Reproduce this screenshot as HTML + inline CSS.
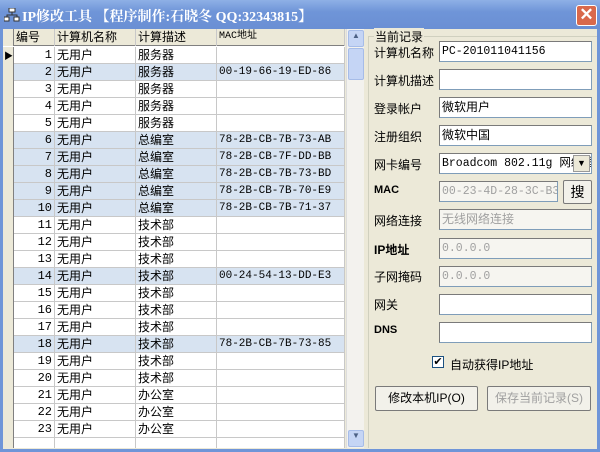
<!DOCTYPE html><html><head><meta charset="utf-8"><style>
*{margin:0;padding:0;box-sizing:border-box}
body{width:600px;height:452px;overflow:hidden;background:#ECE9D8;font-family:"Liberation Sans","SimSun","WenQuanYi Zen Hei","Noto Sans CJK SC",sans-serif;font-size:12px;position:relative;color:#000}
.a{position:absolute}
.title{left:0;top:0;width:600px;height:29px;background:linear-gradient(#8eb0e6,#6f95d8 40%,#6a8fd4);}
.title span{position:absolute;left:22px;top:6px;color:#fff;font-weight:bold;font-size:14px;font-family:"Liberation Serif","Noto Serif CJK SC",serif}
.close{left:576px;top:5px;width:21px;height:21px;background:#d9694c;border:1px solid #fff;border-radius:3px;color:#fff;text-align:center;font-size:17px;line-height:18px;font-weight:bold}
.grid{left:3px;top:29px;width:342px;height:419px;background:#fff;overflow:hidden}
.row{position:absolute;left:0;width:342px;height:17px;border-bottom:1px solid #c8c8c8}
.c{position:absolute;top:0;height:17px;line-height:16px;border-right:1px solid #c8c8c8;white-space:nowrap;overflow:hidden;padding-left:2px}
.ind{left:0;width:11px;background:#ECE9D8;border-right:1px solid #808080}
.hl{background:#D7E3F1}
.mac{font-family:"Liberation Mono",monospace;font-size:11px}
.num{font-family:"Liberation Mono",monospace;font-size:12px}
.lbl{position:absolute;left:374px;font-size:12px}
.inp{position:absolute;left:439px;width:153px;height:21px;background:#fff;border:1px solid #7f9db9;border-top-color:#7a7a7a;border-left-color:#7a7a7a;font-size:12px;padding:2px 2px;line-height:15px;white-space:nowrap;overflow:hidden}
.m{font-family:"Liberation Mono","Noto Sans CJK SC",monospace;font-size:11.5px}
.dis{background:#f6f5f0;color:#a0a0a0}
.btn{position:absolute;height:25px;border:1px solid #7a7a7a;background:#f2f1ea;text-align:center;line-height:23px;font-size:12px;border-radius:2px}
</style></head><body>
<div class="a title"><svg class="a" style="left:4px;top:8px" width="16" height="14"><rect x="5" y="0" width="6" height="4" fill="#fff" stroke="#333"/><rect x="0" y="9" width="5" height="4" fill="#fff" stroke="#333"/><rect x="10" y="9" width="5" height="4" fill="#fff" stroke="#333"/><path d="M8 4v3M3 9V7h10v2" stroke="#333" fill="none"/></svg><span>IP修改工具 【程序制作:石晓冬 QQ:32343815】</span></div>
<div class="a close">✕</div>
<div class="a" style="left:0;top:29px;width:3px;height:423px;background:#6f95d8"></div>
<div class="a" style="left:597px;top:29px;width:3px;height:423px;background:#6f95d8"></div>
<div class="a" style="left:0;top:449px;width:600px;height:3px;background:#6f95d8"></div>
<div class="a grid" id="g">
<div class="row" style="top:0;background:#ECE9D8;border-bottom:1px solid #808080"><div class="c ind"></div><div class="c" style="left:11px;width:41px">编号</div><div class="c" style="left:52px;width:81px">计算机名称</div><div class="c" style="left:133px;width:81px">计算描述</div><div class="c mac" style="left:214px;width:128px;font-size:10px">MAC地址</div></div>
</div>
<div class="a" style="left:346px;top:29px;width:18px;height:419px;background:#f3f2ee;border-left:1px solid #ddd">
<div class="a" style="left:1px;top:1px;width:16px;height:17px;background:#c5d5f5;border:1px solid #a6bce8;border-radius:2px;font-size:8px;text-align:center;color:#4d6185">▲</div>
<div class="a" style="left:1px;top:19px;width:16px;height:32px;background:#c5d5f5;border:1px solid #a6bce8;border-radius:2px"></div>
<div class="a" style="left:1px;top:401px;width:16px;height:17px;background:#c5d5f5;border:1px solid #a6bce8;border-radius:2px;font-size:8px;text-align:center;color:#4d6185">▼</div>
</div>
<div class="a" style="left:368px;top:36px;width:229px;height:412px;border:1px solid #d0d0bf;border-right:none;border-bottom:none"></div>
<div class="a" style="left:374px;top:28px;background:#ECE9D8;font-size:12px;padding:0 1px">当前记录</div>
<div class="lbl" style="top:44px">计算机名称</div><div class="inp m" style="top:41px">PC-201011041156</div>
<div class="lbl" style="top:72px">计算机描述</div><div class="inp" style="top:69px"></div>
<div class="lbl" style="top:100px">登录帐户</div><div class="inp" style="top:97px">微软用户</div>
<div class="lbl" style="top:128px">注册组织</div><div class="inp" style="top:125px">微软中国</div>
<div class="lbl" style="top:156px">网卡编号</div><div class="inp m" style="top:153px;padding-right:20px">Broadcom 802.11g 网络适配器</div>
<div class="a" style="left:573px;top:155px;width:17px;height:17px;background:#ECE9D8;border:1px solid #999;text-align:center;font-size:9px;line-height:15px">▼</div>
<div class="lbl" style="top:184px;font-size:11px;font-weight:bold">MAC</div><div class="inp dis m" style="top:181px;width:119px">00-23-4D-28-3C-B3</div>
<div class="btn" style="left:563px;top:180px;width:29px;height:24px;font-size:14px">搜</div>
<div class="lbl" style="top:212px">网络连接</div><div class="inp dis" style="top:209px">无线网络连接</div>
<div class="lbl" style="top:241px;font-size:12px;font-weight:bold">IP地址</div><div class="inp dis m" style="top:238px">0.0.0.0</div>
<div class="lbl" style="top:268px">子网掩码</div><div class="inp dis m" style="top:266px">0.0.0.0</div>
<div class="lbl" style="top:296px">网关</div><div class="inp" style="top:294px"></div>
<div class="lbl" style="top:324px;font-size:11px;font-weight:bold">DNS</div><div class="inp" style="top:322px"></div>
<div class="a" style="left:432px;top:356px;width:12px;height:12px;border:1px solid #1c5180;background:#fff;font-size:11px;line-height:10px;text-align:center">✔</div>
<div class="a" style="left:450px;top:356px;font-size:12px">自动获得IP地址</div>
<div class="btn" style="left:375px;top:386px;width:103px">修改本机IP(O)</div>
<div class="btn" style="left:487px;top:386px;width:104px;color:#a0a0a0">保存当前记录(S)</div>
<script>
var d=[["服务器",""],["服务器","00-19-66-19-ED-86"],["服务器",""],["服务器",""],["服务器",""],["总编室","78-2B-CB-7B-73-AB"],["总编室","78-2B-CB-7F-DD-BB"],["总编室","78-2B-CB-7B-73-BD"],["总编室","78-2B-CB-7B-70-E9"],["总编室","78-2B-CB-7B-71-37"],["技术部",""],["技术部",""],["技术部",""],["技术部","00-24-54-13-DD-E3"],["技术部",""],["技术部",""],["技术部",""],["技术部","78-2B-CB-7B-73-85"],["技术部",""],["技术部",""],["办公室",""],["办公室",""],["办公室",""],["",""]];
var h="";for(var i=0;i<d.length;i++){var t=18+i*17;var hl=d[i][1]?" hl":"";
h+='<div class="row'+hl+'" style="top:'+t+'px"><div class="c ind">'+(i==0?'<span style="font-size:9px;position:relative;left:-1px">▶</span>':'')+'</div><div class="c num" style="left:11px;width:41px;text-align:right;padding-right:2px">'+(i<23?i+1:'')+'</div><div class="c" style="left:52px;width:81px">'+(i<23?'无用户':'')+'</div><div class="c" style="left:133px;width:81px">'+d[i][0]+'</div><div class="c mac" style="left:214px;width:128px">'+d[i][1]+'</div></div>';}
document.getElementById("g").insertAdjacentHTML("beforeend",h);
</script>
</body></html>
